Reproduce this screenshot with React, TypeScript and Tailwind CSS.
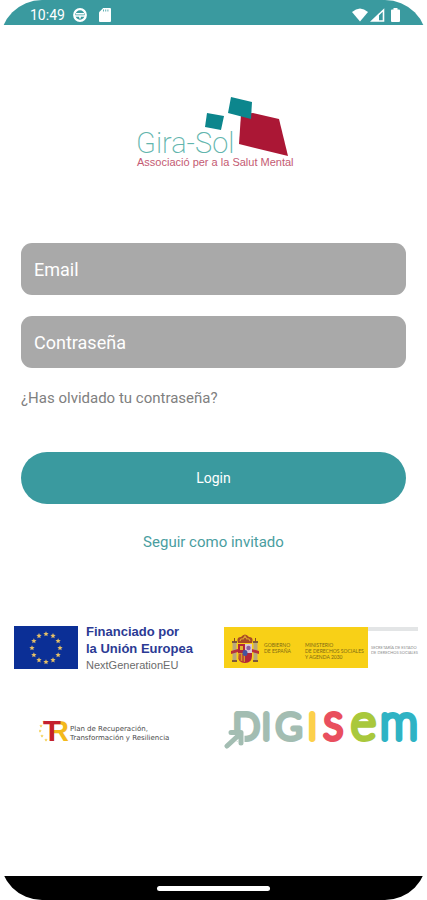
import React, { useState } from 'react';

interface FieldProps {
  id: string;
  label: string;
  type: string;
  value: string;
  onChange: (value: string) => void;
}

const Field: React.FC<FieldProps> = ({ id, label, type, value, onChange }) => (
  <input
    id={id}
    type={type}
    value={value}
    aria-label={label}
    placeholder={label}
    onChange={(e) => onChange(e.target.value)}
    className="block w-full h-[52px] rounded-[11px] bg-[#a9a9a9] px-[13px] text-lg text-white placeholder:text-white placeholder:opacity-100 focus:outline-none"
  />
);

const StatusBar = () => (
  <header className="h-[25px] bg-[#3a9a9f] pl-[30px] pr-[27px] flex items-center justify-between text-white">
    <div className="flex items-center gap-2 pt-1">
      <span className="text-sm leading-4">10:49</span>
      <svg width="14" height="14" viewBox="0 0 14 14" fill="none" stroke="currentColor" strokeWidth="2.2">
        <circle cx="7" cy="7" r="5.8" />
        <path d="M3 5.8h8M1.5 8h11M7 8v2.5" strokeWidth="1.6" />
      </svg>
      <svg width="12" height="14" viewBox="0 0 12 14" className="ml-1">
        <path d="M4.2 0H11q1 0 1 1v12q0 1-1 1H1q-1 0-1-1V4.2z" fill="currentColor" />
        <path d="M4.5 1.5v2M6.7 1.5v2M8.9 1.5v2" stroke="#3a9a9f" strokeWidth="0.8" />
      </svg>
    </div>
    <div className="flex items-center gap-[2px] pt-1">
      <svg width="16" height="14" viewBox="0 0 16 14" fill="currentColor">
        <path d="M8 13.5 0 4Q8-3 16 4z" />
      </svg>
      <svg width="15" height="14" viewBox="0 0 15 14">
        <path d="M13.5 2v11H2z" fill="none" stroke="currentColor" strokeWidth="1.6" />
        <path d="M9 5.5V13H1.5z" fill="currentColor" />
      </svg>
      <svg width="9" height="14" viewBox="0 0 9 14" fill="currentColor" className="ml-1">
        <path d="M2.5 0h4v1.5H8q1 0 1 1V13q0 1-1 1H1q-1 0-1-1V2.5q0-1 1-1h1.5z" />
      </svg>
    </div>
  </header>
);

const GiraSolLogo = () => (
  <svg width="160" height="74" viewBox="0 0 160 74" role="img" aria-label="Gira-Sol">
    <polygon points="105,17 117,16 143,22 152,59 103,47" fill="#ab1735" />
    <polygon points="95,0 116,5 115,22 92,16" fill="#0c868d" />
    <polygon points="71,16 88,19 85,33 69,30" fill="#0c868d" />
    <text x="0" y="56" fontSize="29" fontWeight="200" fill="#62b5ad">Gira-Sol</text>
    <text x="1" y="69" fontSize="11" fill="#c45a72" className="font-['Liberation_Sans',sans-serif]">Associació per a la Salut Mental</text>
  </svg>
);

const starPoints = (cx: number, cy: number, r: number) =>
  Array.from({ length: 10 }, (_, i) => {
    const radius = i % 2 === 0 ? r : r * 0.45;
    const angle = (Math.PI / 5) * i - Math.PI / 2;
    return `${cx + radius * Math.cos(angle)},${cy + radius * Math.sin(angle)}`;
  }).join(' ');

const EuFunding = () => (
  <div className="flex gap-2">
    <svg width="64" height="43" viewBox="0 0 64 43" className="shrink-0" role="img" aria-label="Unión Europea">
      <rect width="64" height="43" fill="#0b2f96" />
      {Array.from({ length: 12 }, (_, i) => {
        const a = (Math.PI / 6) * i;
        return <polygon key={i} points={starPoints(32 + 14 * Math.sin(a), 22 - 14 * Math.cos(a), 2.8)} fill="#e6c067" />;
      })}
    </svg>
    <div className="font-['Liberation_Sans',sans-serif] whitespace-nowrap -mt-[3px]">
      <p className="text-[13px] leading-[17px] font-bold text-[#2b3a94]">
        Financiado por
        <br />
        la Unión Europea
      </p>
      <p className="text-[11px] leading-[17px] text-[#6b6b6b]">NextGenerationEU</p>
    </div>
  </div>
);

const CoatOfArms = () => (
  <svg width="28" height="30" viewBox="0 0 28 30" className="shrink-0">
    <path d="M1.5 9h4v18h-4zM22.5 9h4v18h-4z" fill="#b9a77c" />
    <path d="M1 8h5M1 27h5M22 8h5M22 27h5" stroke="#7d5a3c" strokeWidth="2" />
    <path d="M0 17l7-2v3l-7 2zM28 17l-7-2v3l7 2z" fill="#b8313a" />
    <path d="M3 4h1v4H3zM24 4h1v4h-1z" fill="#8b4a2b" />
    <path d="M7 9Q5 3 10 3q4-5 8 0 5 0 3 6z" fill="#a84a25" />
    <path d="M9 7q1-3 3-2l2-3 2 3q2-1 3 2" fill="none" stroke="#dba52e" strokeWidth="1.2" />
    <path d="M7 10h14v12q0 7-7 7t-7-7z" fill="#b3263a" />
    <path d="M14 10h7v9h-7z" fill="#dcc6d2" />
    <path d="M7 19h7v9q-7-1-7-7z" fill="#d39a29" />
    <path d="M9 20v6M12 20v8" stroke="#b3263a" strokeWidth="1.2" />
    <path d="M9 12h3v4H9z" fill="#e3b62f" />
    <circle cx="17.5" cy="14" r="2.2" fill="#8d5f9d" />
    <ellipse cx="14" cy="19" rx="2.5" ry="3" fill="#4453a0" />
  </svg>
);

const GobiernoLogo = () => (
  <div className="flex w-full font-[Lato,sans-serif] text-[5px] leading-[6px] whitespace-nowrap">
    <div className="flex w-36 h-[41px] shrink-0 mt-px bg-[#f8d017] pl-[7px] pt-[7px] text-[#7d6a15]">
      <CoatOfArms />
      <p className="pl-[5px] pt-2 w-[46px]">
        GOBIERNO
        <br />
        DE ESPAÑA
      </p>
      <p className="pt-2">
        MINISTERIO
        <br />
        DE DERECHOS SOCIALES
        <br />
        Y AGENDA 2030
      </p>
    </div>
    <div className="flex-1 text-[#8d8d8d] pt-px">
      <div className="h-1 bg-[#e3e5e6]" />
      <p className="pt-[14px] pl-[3px] text-[4px] leading-[5px]">
        SECRETARÍA DE ESTADO
        <br />
        DE DERECHOS SOCIALES
      </p>
    </div>
  </div>
);

const RecoveryPlan = () => (
  <div className="flex items-center pl-[25px] pt-[5px]">
    <svg width="31" height="34" viewBox="0 0 31 34" className="shrink-0 font-['Liberation_Sans',sans-serif]" fontWeight="700">
      {[[5, 9], [2, 13], [1, 18], [3, 23], [7, 27]].map(([x, y]) => (
        <polygon key={y} points={starPoints(x, y, 1.8)} fill="#f4d35c" />
      ))}
      <text x="9" y="28" fontSize="29" fill="#f3b91c">R</text>
      <text x="4" y="28" fontSize="29" fill="#c4202f">T</text>
    </svg>
    <p className="font-['DejaVu_Sans',sans-serif] text-[7px] leading-[9px] pt-2 text-[#4a4a4a] whitespace-nowrap">
      Plan de Recuperación,
      <br />
      Transformación y Resiliencia
    </p>
  </div>
);

// Hairline letters with a thick round stroke give the soft, tubular wordmark
const DIGISEM_LETTERS = [
  { char: 'D', x: 9, size: 35, color: '#a3bdb2' },
  { char: 'I', x: 38, size: 35, color: '#a3bdb2' },
  { char: 'G', x: 52, size: 35, color: '#a3bdb2' },
  { char: 'I', x: 84, size: 35, color: '#fcd04b' },
  { char: 'S', x: 100, size: 35, color: '#e94f5e' },
  { char: 'e', x: 127, size: 48, color: '#a9c83c' },
  { char: 'm', x: 156, size: 48, color: '#2fb3c4' },
];

const DigisemLogo = () => (
  <svg width="196" height="60" viewBox="0 -18 196 60" role="img" aria-label="DIGISEM" className="-mt-4 font-[Lato,sans-serif]" fontWeight="100" strokeLinejoin="round" strokeLinecap="round">
    {DIGISEM_LETTERS.map(({ char, x, size, color }) => (
      <text key={x} x={x} y="29" fontSize={size} fill={color} stroke={color} strokeWidth="6">{char}</text>
    ))}
    <path d="M3 36 16 24M7 23.5 17 23.5V34" fill="none" stroke="#fff" strokeWidth="7" />
    <path d="M3 36 16 24M7 22.5 17 22.5V33" fill="none" stroke="#a3bdb2" strokeWidth="5" />
  </svg>
);

export default function App() {
  const [email, setEmail] = useState('');
  const [password, setPassword] = useState('');

  return (
    <div className="min-h-screen flex flex-col bg-white rounded-[42px] overflow-hidden font-[Roboto,sans-serif]">
      <StatusBar />

      <main className="flex-1 flex flex-col">
        <div className="flex justify-center pt-[72px] pl-1">
          <GiraSolLogo />
        </div>

        <form onSubmit={(e) => e.preventDefault()} className="flex flex-col px-[21px] pt-[72px]">
          <div className="flex flex-col gap-[21px]">
            <Field id="email" label="Email" type="email" value={email} onChange={setEmail} />
            <Field id="password" label="Contraseña" type="password" value={password} onChange={setPassword} />
          </div>
          <a href="#recuperar" className="self-start mt-5 text-[15px] leading-5 text-[#808080]">
            ¿Has olvidado tu contraseña?
          </a>
          <button type="submit" className="mt-11 h-[52px] rounded-full bg-[#3a9a9f] text-sm text-white">
            Login
          </button>
          <a href="#invitado" className="self-center mt-7 text-[15px] leading-5 text-[#4a9e9f]">
            Seguir como invitado
          </a>
        </form>

        {/* Funding partners */}
        <div className="grid grid-cols-[1fr_194px] gap-y-[34px] items-start pl-[14px] pr-[9px] pt-[74px]">
          <EuFunding />
          <GobiernoLogo />
          <RecoveryPlan />
          <DigisemLogo />
        </div>
      </main>

      <footer className="h-6 bg-black flex items-center justify-center">
        <div className="w-[113px] h-[5px] rounded-full bg-white" />
      </footer>
    </div>
  );
}
